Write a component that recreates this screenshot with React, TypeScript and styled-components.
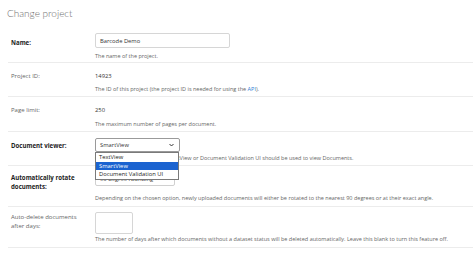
import styled, { createGlobalStyle } from "styled-components";

const GlobalStyle = createGlobalStyle`
    html, body {
        margin: 0;
        padding: 0;
        background: #fff;
    }
    body {
        font-family: "Open Sans", "Noto Sans", sans-serif;
        color: #444;
    }
`;

const Page = styled.div`
    width: 474px;
    height: 255px;
    overflow: hidden;
    padding: 0 1px 0 8px;
    box-sizing: border-box;
`;

const Title = styled.h1`
    margin: 0 0 0 -1px;
    padding: 5px 0 0 0;
    height: 28px;
    box-sizing: border-box;
    font-family: Lato, "Open Sans", sans-serif;
    font-size: 10px;
    line-height: 16px;
    font-weight: 300;
    color: #6f6f6f;
`;

const Row = styled.div<{ $pt?: number; $pb?: number }>`
    display: grid;
    grid-template-columns: 84px 1fr;
    padding: ${({ $pt }) => $pt ?? 5}px 0 ${({ $pb }) => $pb ?? 2}px 3px;
    border-bottom: 1px solid #ececec;
    position: relative;
`;

const Label = styled.div<{ $bold?: boolean; $pt?: number }>`
    padding-top: ${({ $pt }) => $pt ?? 0}px;
    font-size: ${({ $bold }) => ($bold ? 6.1 : 6)}px;
    line-height: 9px;
    font-weight: ${({ $bold }) => ($bold ? 700 : 400)};
    color: ${({ $bold }) => ($bold ? "#222" : "#666")};
`;

const Field = styled.div`
    display: flex;
    flex-direction: column;
    align-items: flex-start;
    position: relative;
`;

const Value = styled.div`
    margin-top: 3px;
    font-size: 5.8px;
    line-height: 10px;
    color: #333;
`;

const Help = styled.div<{ $mt?: number }>`
    margin-top: ${({ $mt }) => $mt ?? 3}px;
    font-size: 5.5px;
    line-height: 10px;
    color: #666;
    white-space: nowrap;
`;

const Link = styled.a`
    color: #2d7ed6;
    text-decoration: none;
`;

const TextBox = styled.div<{ $w: number; $h: number }>`
    width: ${({ $w }) => $w}px;
    height: ${({ $h }) => $h}px;
    box-sizing: border-box;
    border: 1px solid #d6d6d6;
    border-radius: 2px;
    padding: 0 4px;
    display: flex;
    align-items: center;
    font-size: 5.8px;
    color: #333;
`;

const Select = styled.div<{ $w: number; $focus?: boolean }>`
    width: ${({ $w }) => $w}px;
    height: 14px;
    box-sizing: border-box;
    border: 1px solid ${({ $focus }) => ($focus ? "#9a9a9a" : "#d0d0d0")};
    border-radius: 2px;
    padding: 0 5px 0 4px;
    display: flex;
    align-items: center;
    justify-content: space-between;
    font-size: 5.8px;
    color: #333;
`;

const Chevron = () => (
    <svg width="5" height="4" viewBox="0 0 10 6">
        <path d="M1 1l4 4 4-4" fill="none" stroke="#222" strokeWidth="1.8" />
    </svg>
);

const Options = styled.ul`
    position: absolute;
    top: 14px;
    left: 0;
    width: 84px;
    margin: 0;
    padding: 0;
    list-style: none;
    background: #fff;
    border: 1px solid #7a7a7a;
    box-sizing: border-box;
    z-index: 10;
`;

const Option = styled.li<{ $active?: boolean }>`
    height: 8.5px;
    line-height: 8.5px;
    padding-left: 3px;
    font-size: 5.8px;
    color: ${({ $active }) => ($active ? "#fff" : "#222")};
    background: ${({ $active }) => ($active ? "#1b63d0" : "transparent")};
`;

const SelectWrap = styled.div`
    position: relative;
`;

export default function App() {
    return (
        <Page>
            <GlobalStyle />
            <Title>Change project</Title>

            <Row $pb={1}>
                <Label $bold $pt={5}>
                    Name:
                </Label>
                <Field>
                    <TextBox $w={135} $h={15}>
                        Barcode Demo
                    </TextBox>
                    <Help>The name of the project.</Help>
                </Field>
            </Row>

            <Row>
                <Label $pt={4}>Project ID:</Label>
                <Field>
                    <Value>14923</Value>
                    <Help>
                        The ID of this project (the project ID is needed for
                        using the <Link>API</Link>).
                    </Help>
                </Field>
            </Row>

            <Row>
                <Label $pt={4}>Page limit:</Label>
                <Field>
                    <Value>250</Value>
                    <Help $mt={4}>The maximum number of pages per document.</Help>
                </Field>
            </Row>

            <Row $pt={6}>
                <Label $bold $pt={3}>
                    Document viewer:
                </Label>
                <Field>
                    <SelectWrap>
                        <Select $w={85} $focus>
                            SmartView
                            <Chevron />
                        </Select>
                        <Options>
                            <Option>TextView</Option>
                            <Option $active>SmartView</Option>
                            <Option>Document Validation UI</Option>
                        </Options>
                    </SelectWrap>
                    <Help $mt={1}>
                        Choose whether TextView, SmartView or Document
                        Validation UI should be used to view Documents.
                    </Help>
                </Field>
            </Row>

            <Row $pt={6} $pb={3}>
                <Label $bold $pt={1}>
                    Automatically rotate
                    <br />
                    documents:
                </Label>
                <Field>
                    <Select $w={80}>
                        90 degree rounding
                        <Chevron />
                    </Select>
                    <Help $mt={7}>
                        Depending on the chosen option, newly uploaded documents
                        will either be rotated to the nearest 90 degrees or at
                        their exact angle.
                    </Help>
                </Field>
            </Row>

            <Row $pt={5} $pb={3}>
                <Label $pt={1}>
                    Auto-delete documents
                    <br />
                    after days:
                </Label>
                <Field>
                    <TextBox $w={38} $h={22} />
                    <Help $mt={0}>
                        The number of days after which documents without a
                        dataset status will be deleted automatically. Leave
                        this blank to turn this feature off.
                    </Help>
                </Field>
            </Row>
        </Page>
    );
}
